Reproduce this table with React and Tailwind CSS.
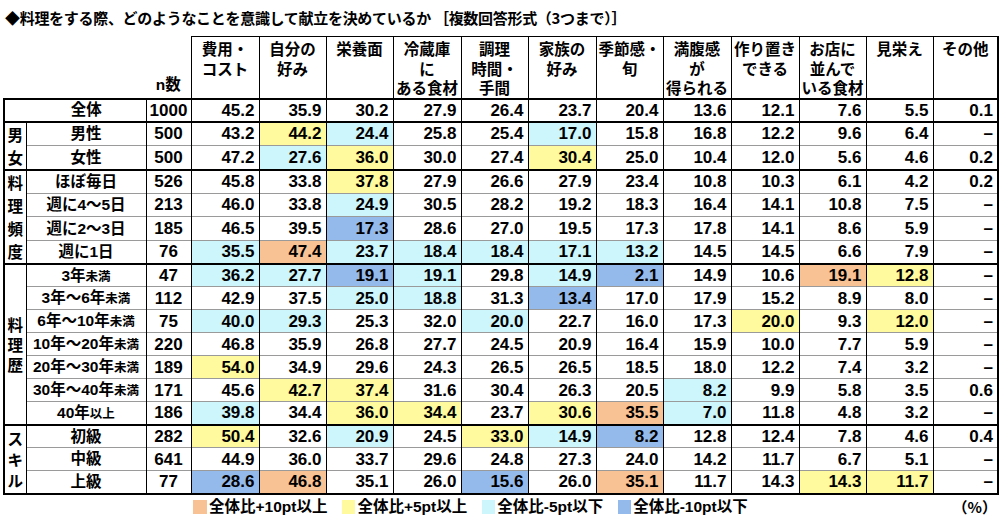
import React from 'react';

// 料理をする際に意識すること — クロス集計表
const HEADERS = [
  ['費用・', 'コスト'],
  ['自分の', '好み'],
  ['栄養面'],
  ['冷蔵庫', 'に', 'ある食材'],
  ['調理', '時間・', '手間'],
  ['家族の', '好み'],
  ['季節感・', '旬'],
  ['満腹感', 'が', '得られる'],
  ['作り置き', 'できる'],
  ['お店に', '並んで', 'いる食材'],
  ['見栄え'],
  ['その他'],
];

const COL_W = ['w-[68px]', 'w-[67px]', 'w-[67px]', 'w-[68px]', 'w-[67px]', 'w-[68px]', 'w-[67px]', 'w-[68px]', 'w-[68px]', 'w-[67px]', 'w-[67px]', 'w-[65px]'];

const TOTAL = [45.2, 35.9, 30.2, 27.9, 26.4, 23.7, 20.4, 13.6, 12.1, 7.6, 5.5, 0.1];

const GROUPS = [
  {
    name: '男女',
    leading: 'leading-[23px]',
    rows: [
      [['男性'], 500, [43.2, 44.2, 24.4, 25.8, 25.4, 17.0, 15.8, 16.8, 12.2, 9.6, 6.4, null]],
      [['女性'], 500, [47.2, 27.6, 36.0, 30.0, 27.4, 30.4, 25.0, 10.4, 12.0, 5.6, 4.6, 0.2]],
    ],
  },
  {
    name: '料理頻度',
    leading: 'leading-[23px]',
    rows: [
      [['ほぼ毎日'], 526, [45.8, 33.8, 37.8, 27.9, 26.6, 27.9, 23.4, 10.8, 10.3, 6.1, 4.2, 0.2]],
      [['週に4～5日'], 213, [46.0, 33.8, 24.9, 30.5, 28.2, 19.2, 18.3, 16.4, 14.1, 10.8, 7.5, null]],
      [['週に2～3日'], 185, [46.5, 39.5, 17.3, 28.6, 27.0, 19.5, 17.3, 17.8, 14.1, 8.6, 5.9, null]],
      [['週に1日'], 76, [35.5, 47.4, 23.7, 18.4, 18.4, 17.1, 13.2, 14.5, 14.5, 6.6, 7.9, null]],
    ],
  },
  {
    name: '料理歴',
    leading: 'leading-[20px]',
    rows: [
      [['3年', '未満'], 47, [36.2, 27.7, 19.1, 19.1, 29.8, 14.9, 2.1, 14.9, 10.6, 19.1, 12.8, null]],
      [['3年～6年', '未満'], 112, [42.9, 37.5, 25.0, 18.8, 31.3, 13.4, 17.0, 17.9, 15.2, 8.9, 8.0, null]],
      [['6年～10年', '未満'], 75, [40.0, 29.3, 25.3, 32.0, 20.0, 22.7, 16.0, 17.3, 20.0, 9.3, 12.0, null]],
      [['10年～20年', '未満'], 220, [46.8, 35.9, 26.8, 27.7, 24.5, 20.9, 16.4, 15.9, 10.0, 7.7, 5.9, null]],
      [['20年～30年', '未満'], 189, [54.0, 34.9, 29.6, 24.3, 26.5, 26.5, 18.5, 18.0, 12.2, 7.4, 3.2, null]],
      [['30年～40年', '未満'], 171, [45.6, 42.7, 37.4, 31.6, 30.4, 26.3, 20.5, 8.2, 9.9, 5.8, 3.5, 0.6]],
      [['40年', '以上'], 186, [39.8, 34.4, 36.0, 34.4, 23.7, 30.6, 35.5, 7.0, 11.8, 4.8, 3.2, null]],
    ],
  },
  {
    name: 'スキル',
    leading: 'leading-[21px]',
    rows: [
      [['初級'], 282, [50.4, 32.6, 20.9, 24.5, 33.0, 14.9, 8.2, 12.8, 12.4, 7.8, 4.6, 0.4]],
      [['中級'], 641, [44.9, 36.0, 33.7, 29.6, 24.8, 27.3, 24.0, 14.2, 11.7, 6.7, 5.1, null]],
      [['上級'], 77, [28.6, 46.8, 35.1, 26.0, 15.6, 26.0, 35.1, 11.7, 14.3, 14.3, 11.7, null]],
    ],
  },
];

const BG = {
  O: 'bg-[#f9c294]',
  Y: 'bg-[#fffa9e]',
  L: 'bg-[#cdf6fc]',
  B: 'bg-[#94b9eb]',
  N: '',
};

function tone(v, base) {
  if (v == null) return 'N';
  const d = Math.round((v - base) * 10) / 10;
  if (d >= 10) return 'O';
  if (d >= 5) return 'Y';
  if (d <= -10) return 'B';
  if (d <= -5) return 'L';
  return 'N';
}

const fmt = (v) => (v == null ? '–' : v.toFixed(1));

function Label({ parts }) {
  return (
    <span>
      {parts[0]}
      {parts[1] && <span className="text-[12.5px]">{parts[1]}</span>}
    </span>
  );
}

function DataCells({ values, top, last }) {
  return values.map((v, i) => (
    <td
      key={i}
      className={`h-[23px] p-0 pr-[4px] text-right border-l border-black ${top} ${last ? 'border-b-2 border-b-black' : ''} ${i === values.length - 1 ? 'border-r-2 border-r-black' : ''} ${BG[tone(v, TOTAL[i])]}`}
    >
      {fmt(v)}
    </td>
  ));
}

export default function App() {
  return (
    <div className="w-[1000px] h-[515px] bg-white text-black font-['Liberation_Sans','Noto_Sans_CJK_JP',sans-serif] font-bold overflow-hidden">
      <div className="h-[36px] pl-[5px] pt-[9px] text-[15px] leading-[18px] tracking-[-0.3px] font-['Noto_Sans_CJK_JP',sans-serif]">
        ◆料理をする際、どのようなことを意識して献立を決めているか ［複数回答形式（3つまで）］
      </div>

      <table className="ml-[3px] w-[994px] table-fixed border-collapse text-[17px] leading-none">
        <colgroup>
          <col className="w-[22px]" />
          <col className="w-[120px]" />
          <col className="w-[45px]" />
          {COL_W.map((w, i) => (
            <col key={i} className={w} />
          ))}
        </colgroup>
        <thead>
          <tr className="h-[61px]">
            <th colSpan={2} className="p-0" />
            <th className="p-0 pb-[5px] align-bottom text-center text-[15.5px] font-bold">n数</th>
            {HEADERS.map((h, i) => (
              <th
                key={i}
                className={`p-0 pt-[2px] align-top text-center font-bold text-[15.5px] leading-[19.5px] border-t border-l border-black font-['Noto_Sans_CJK_JP',sans-serif] ${i === HEADERS.length - 1 ? 'border-r-2 border-r-black' : ''}`}
              >
                {h.map((line, j) => (
                  <div key={j}>{line}</div>
                ))}
              </th>
            ))}
          </tr>
        </thead>
        <tbody>
          <tr>
            <td colSpan={2} className="h-[23px] p-0 pl-[22px] text-center text-[15.5px] border-t-2 border-l-2 border-black">
              全体
            </td>
            <td className="p-0 text-center border-t-2 border-l border-black">1000</td>
            <DataCells values={TOTAL} top="border-t-2 border-t-black" />
          </tr>
          {GROUPS.map((g, gi) =>
            g.rows.map(([label, n, vals], ri) => {
              const first = ri === 0;
              const lastRow = gi === GROUPS.length - 1 && ri === g.rows.length - 1;
              const top = first ? 'border-t-2 border-t-black' : 'border-t border-t-[#9a9a9a]';
              return (
                <tr key={`${gi}-${ri}`}>
                  {first && (
                    <td
                      rowSpan={g.rows.length}
                      className={`p-0 text-center align-middle text-[15.5px] border-t-2 border-l-2 border-r border-black font-['Noto_Sans_CJK_JP',sans-serif] ${g.leading} ${gi === GROUPS.length - 1 ? 'border-b-2' : ''}`}
                    >
                      <div className="flex flex-col items-center">
                        {g.name.split('').map((c, k) => (
                          <span key={k}>{c}</span>
                        ))}
                      </div>
                    </td>
                  )}
                  <td className={`h-[23px] p-0 text-center text-[15.5px] whitespace-nowrap ${top} ${lastRow ? 'border-b-2 border-b-black' : ''}`}>
                    <Label parts={label} />
                  </td>
                  <td className={`p-0 text-center border-l border-black ${top} ${lastRow ? 'border-b-2 border-b-black' : ''}`}>{n}</td>
                  <DataCells values={vals} top={top} last={lastRow} />
                </tr>
              );
            })
          )}
        </tbody>
      </table>

      <div className="flex items-center h-[18px] mt-[3px] pl-[193px] pr-[3px] text-[15.5px] leading-[18px]">
        <div className="flex items-center gap-[2px]">
          <span className="w-[14px] h-[14px] bg-[#f9c294]" />
          <span>全体比+10pt以上</span>
        </div>
        <div className="flex items-center gap-[2px] ml-[15px]">
          <span className="w-[13px] h-[14px] bg-[#fffa9e]" />
          <span>全体比+5pt以上</span>
        </div>
        <div className="flex items-center gap-[2px] ml-[15px]">
          <span className="w-[13px] h-[14px] bg-[#cdf6fc]" />
          <span>全体比-5pt以下</span>
        </div>
        <div className="flex items-center gap-[2px] ml-[15px]">
          <span className="w-[13px] h-[14px] bg-[#94b9eb]" />
          <span>全体比-10pt以下</span>
        </div>
        <span className="ml-auto text-[15px] font-['Noto_Sans_CJK_JP',sans-serif]">（%）</span>
      </div>
    </div>
  );
}
